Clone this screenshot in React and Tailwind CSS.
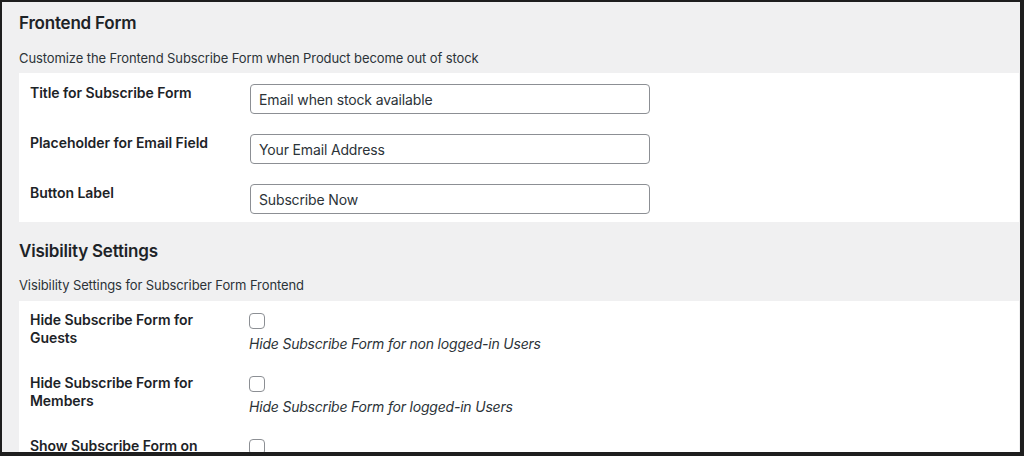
import React from "react";

const font = { fontFamily: 'Inter, "Noto Sans", "Liberation Sans", sans-serif' };

function TextRow({ label, value }) {
  return (
    <div className="flex h-[50px]">
      <div className="w-[231px] shrink-0 pl-[11px] pr-[20px] pt-[11px] text-[14px] leading-[18px] font-semibold tracking-[-0.05px] text-[#1d2327]">
        {label}
      </div>
      <div className="pt-[11px]">
        <div className="w-[400px] h-[30px] border border-[#8c8f94] rounded-[4px] bg-white px-[8px] flex items-center text-[14px] tracking-[-0.15px] text-[#2c3338]">
          {value}
        </div>
      </div>
    </div>
  );
}

function CheckRow({ label, desc }) {
  return (
    <div className="flex h-[63px]">
      <div className="w-[230px] shrink-0 pl-[11px] pr-[20px] pt-[10px] text-[14px] leading-[18px] font-semibold tracking-[-0.05px] text-[#1d2327]">
        {label}
      </div>
      <div className="pt-[12px]">
        <div className="w-[16px] h-[16px] border border-[#8c8f94] rounded-[4px] bg-white" />
        {desc && (
          <div className="mt-[6px] text-[14px] leading-[18px] italic tracking-[-0.2px] text-[#2c3338]">{desc}</div>
        )}
      </div>
    </div>
  );
}

export default function App() {
  return (
    <div
      style={font}
      className="w-[1024px] h-[456px] overflow-hidden bg-[#f0f0f1] border-l-[2px] border-t-[2px] border-r-[4px] border-b-[4px] border-[#1e1e1e]"
    >
      <div className="pl-[17px] pr-[1px]">
        <div className="pt-[11px] h-[30px] text-[17px] leading-[20px] font-semibold tracking-[-0.2px] text-[#1d2327]">
          Frontend Form
        </div>
        <div className="mt-[17px] text-[13px] leading-[18px] tracking-[-0.1px] text-[#2c3338]">
          Customize the Frontend Subscribe Form when Product become out of stock
        </div>
        <div className="mt-[6px] bg-white h-[149px]">
          <TextRow label="Title for Subscribe Form" value="Email when stock available" />
          <TextRow label="Placeholder for Email Field" value="Your Email Address" />
          <TextRow label="Button Label" value="Subscribe Now" />
        </div>
        <div className="mt-[19px] h-[20px] text-[17px] leading-[20px] font-semibold tracking-[-0.2px] text-[#1d2327]">
          Visibility Settings
        </div>
        <div className="mt-[15px] text-[13px] leading-[18px] tracking-[-0.1px] text-[#2c3338]">
          Visibility Settings for Subscriber Form Frontend
        </div>
        <div className="mt-[7px] bg-white">
          <CheckRow label="Hide Subscribe Form for Guests" desc="Hide Subscribe Form for non logged-in Users" />
          <CheckRow label="Hide Subscribe Form for Members" desc="Hide Subscribe Form for logged-in Users" />
          <CheckRow label="Show Subscribe Form on" />
        </div>
      </div>
    </div>
  );
}
